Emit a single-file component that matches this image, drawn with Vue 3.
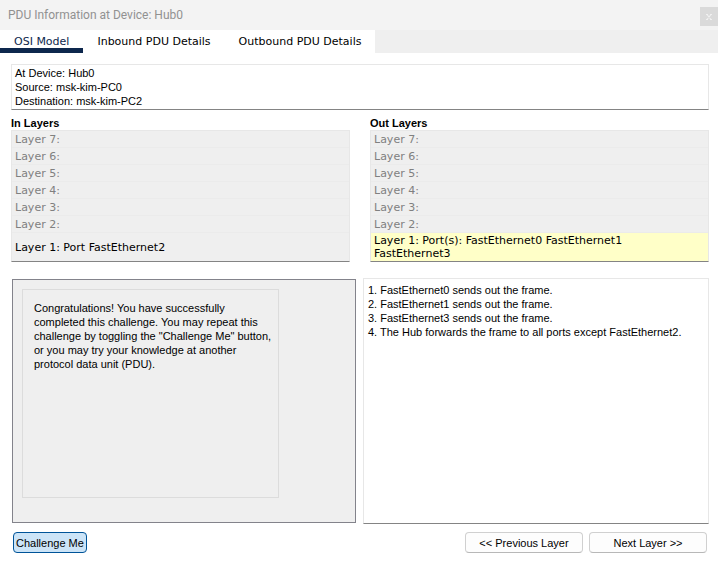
<script setup>
import { ref } from 'vue'

const tabs = ['OSI Model', 'Inbound PDU Details', 'Outbound PDU Details']
const activeTab = ref(0)
const upperLayers = [7, 6, 5, 4, 3, 2]
const panels = [
  { title: 'In Layers', current: 'Layer 1: Port FastEthernet2', highlighted: false },
  { title: 'Out Layers', current: 'Layer 1: Port(s): FastEthernet0 FastEthernet1 FastEthernet3', highlighted: true },
]
const steps = [
  'FastEthernet0 sends out the frame.',
  'FastEthernet1 sends out the frame.',
  'FastEthernet3 sends out the frame.',
  'The Hub forwards the frame to all ports except FastEthernet2.',
]
const challenge = ref(true)
</script>

<template>
  <main class="window">
    <header class="titlebar">
      <h1>PDU Information at Device: Hub0</h1>
      <button class="close" type="button" aria-label="Close">
        <svg viewBox="0 0 6 6" width="6" height="6" aria-hidden="true">
          <path d="M0 .5H2M4 .5H6M0 5.5H2M4 5.5H6M1 .5 5 5.5M5 .5 1 5.5" fill="none" stroke="currentColor" stroke-width="1.2" />
        </svg>
      </button>
    </header>

    <nav class="tabs" role="tablist">
      <button
        v-for="(tab, i) in tabs"
        :key="tab"
        type="button"
        role="tab"
        class="tab"
        :class="{ active: i === activeTab }"
        :aria-selected="i === activeTab"
        @click="activeTab = i"
      >{{ tab }}</button>
    </nav>

    <div class="content">
      <section class="summary sunken">
        <p>At Device: Hub0</p>
        <p>Source: msk-kim-PC0</p>
        <p>Destination: msk-kim-PC2</p>
      </section>

      <div class="layers">
        <section v-for="panel in panels" :key="panel.title" class="stack">
          <h2>{{ panel.title }}</h2>
          <ul class="sunken">
            <li v-for="n in upperLayers" :key="n">Layer {{ n }}:</li>
            <li class="current" :class="{ highlighted: panel.highlighted }">
              <span>{{ panel.current }}</span>
            </li>
          </ul>
        </section>
      </div>

      <div class="details">
        <section class="challenge">
          <div class="message">
            <p>
              Congratulations! You have successfully completed this challenge. You may repeat this
              challenge by toggling the "Challenge Me" button, or you may try your knowledge at
              another protocol data unit (PDU).
            </p>
          </div>
        </section>
        <section class="steps sunken">
          <p v-for="(step, i) in steps" :key="step">{{ i + 1 }}. {{ step }}</p>
        </section>
      </div>

      <footer class="actions">
        <button
          type="button"
          class="button toggle"
          :class="{ pressed: challenge }"
          :aria-pressed="challenge"
          @click="challenge = !challenge"
        >Challenge Me</button>
        <button type="button" class="button step">&lt;&lt; Previous Layer</button>
        <button type="button" class="button step">Next Layer &gt;&gt;</button>
      </footer>
    </div>
  </main>
</template>

<style>
body {
  background: #fff;
}
</style>

<style scoped>
.window {
  display: flex;
  flex-direction: column;
  min-height: 100vh;
  color: #000;
  font: 11px/14px "Liberation Sans", Arial, sans-serif;
}

h1, h2, p, ul {
  margin: 0;
  padding: 0;
}

button {
  margin: 0;
  font: inherit;
  color: inherit;
}

.titlebar {
  display: flex;
  align-items: center;
  justify-content: space-between;
  height: 30px;
  padding-left: 8px;
  background: #f3f3f3;
}

h1 {
  color: #919191;
  font: 12px/16px Roboto, "Open Sans", sans-serif;
}

.close {
  display: grid;
  place-items: center;
  width: 18px;
  height: 19px;
  margin-top: 3px;
  padding: 0;
  border: 0;
  background: #dadada;
  color: #f0f0f0;
}

.tabs {
  display: flex;
  height: 23px;
  background: #efefef;
}

.tab {
  padding: 6px 14px 0;
  border: 0;
  border-bottom: 5px solid #fff;
  background: #fff;
  font: 11px/12px "DejaVu Sans", Verdana, sans-serif;
}

.tab.active {
  border-bottom-color: #0d274d;
  color: #0d274d;
}

.content {
  display: flex;
  flex: 1;
  flex-direction: column;
  padding: 11px 9px 27px 11px;
}

.sunken {
  border: 1px solid #e7e7e7;
  border-bottom-color: #848484;
}

.summary {
  padding: 1px 3px;
}

.layers {
  display: grid;
  grid-template-columns: 1fr 1fr;
  gap: 20px;
  margin-top: 6px;
}

h2 {
  font-size: 11px;
  line-height: 14px;
}

.stack ul {
  list-style: none;
  background: #efefef;
  font: 11px/13px "DejaVu Sans", Verdana, sans-serif;
}

.stack li {
  box-sizing: border-box;
  height: 17px;
  padding: 2px 3px;
  border-bottom: 1px solid #ebebeb;
  color: #808080;
}

.stack .current {
  display: flex;
  align-items: center;
  height: 28px;
  padding: 0 12px 0 3px;
  border: 0;
  color: #000;
}

.stack .highlighted {
  background: #ffffc8;
}

.details {
  display: grid;
  flex: 1;
  grid-template-columns: 1fr 1fr;
  gap: 6px;
  margin-top: 16px;
}

.challenge {
  display: flex;
  margin: 1px;
  padding: 9px 76px 24px 9px;
  border: 1px solid #83838b;
  background: #efefef;
}

.message {
  flex: 1;
  padding: 11px 2px 11px 11px;
  border: 1px solid #dcdcdc;
}

.steps {
  padding: 4px;
}

.actions {
  display: flex;
  gap: 6px;
  margin-top: 8px;
  padding: 0 2px;
}

.button {
  box-sizing: border-box;
  height: 21px;
  padding: 0 2px;
  border: 1px solid #d0d0d0;
  border-bottom-color: #b8b8b8;
  border-radius: 4px;
  background: #fdfdfd;
}

.toggle {
  margin-right: auto;
}

.pressed {
  border-color: #005499;
  background: #cce4f7;
}

.step {
  width: 118px;
}
</style>
